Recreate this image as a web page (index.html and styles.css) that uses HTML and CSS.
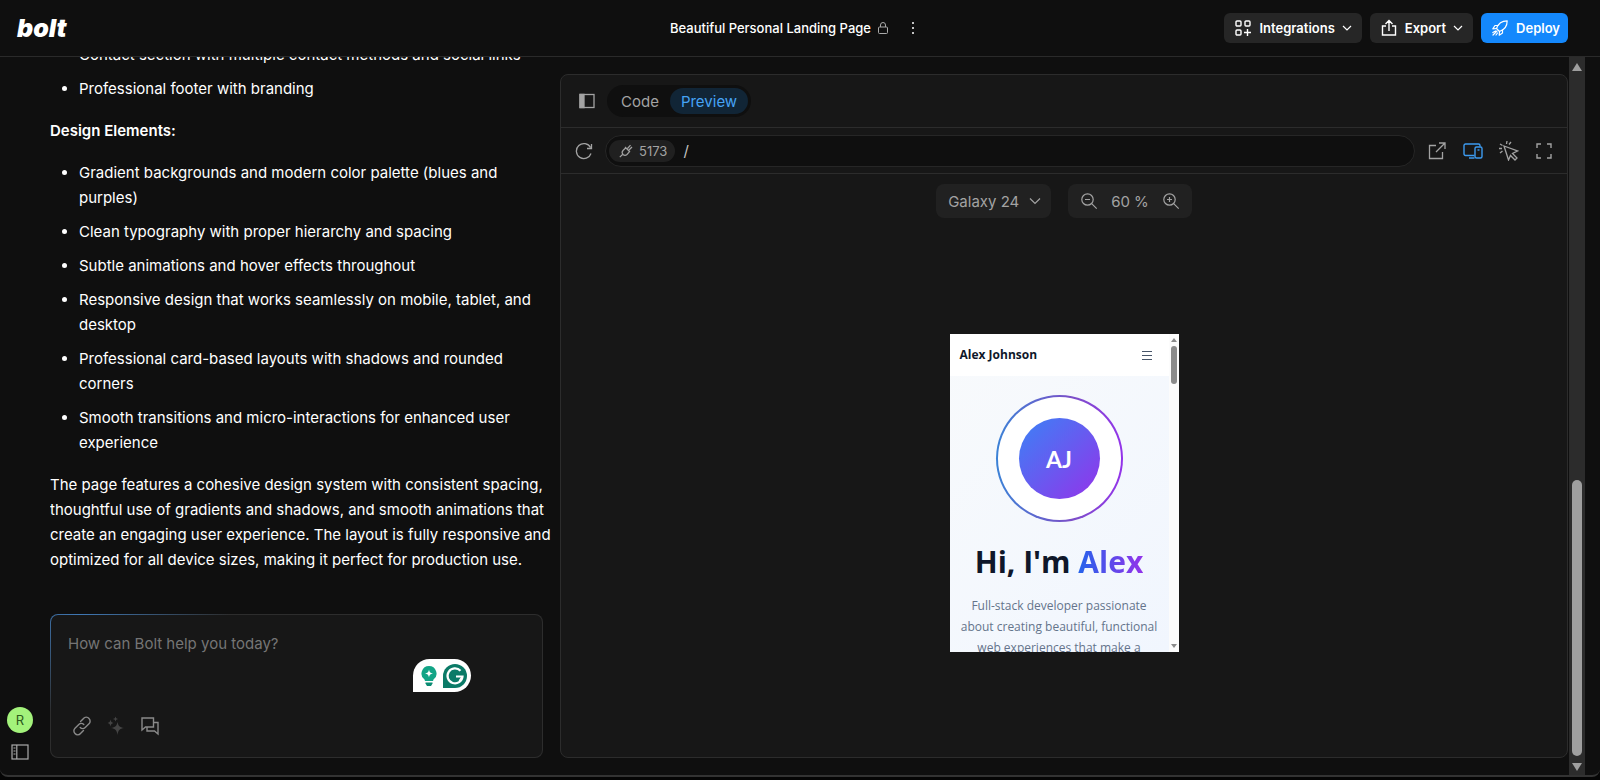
FILE: index.html
```html
<!DOCTYPE html>
<html lang="en">
<head>
    <meta charset="UTF-8">
    <meta name="viewport" content="width=device-width, initial-scale=1.0">
    <title>Beautiful Personal Landing Page</title>
    <link rel="stylesheet" href="styles.css">
</head>
<body>
    <div class="window">
        <!-- Top bar -->
        <header class="topbar">
            <a href="#" class="logo">bolt</a>
            <div class="project">
                <span class="project-name">Beautiful Personal Landing Page</span>
                <svg class="lock" width="12" height="14" viewBox="0 0 12 14" fill="none" stroke="currentColor"><rect x="1.500" y="6" width="9" height="6.500" rx="1"/><path d="M3.500 6V4a2.500 2.500 0 0 1 5 0v2"/></svg>
                <button class="icon-btn more" aria-label="More options">
                    <svg width="4" height="14" viewBox="0 0 4 14" fill="currentColor"><circle cx="2" cy="2" r="1"/><circle cx="2" cy="7" r="1"/><circle cx="2" cy="12" r="1"/></svg>
                </button>
            </div>
            <div class="actions">
                <button class="btn">
                    <svg width="18" height="18" viewBox="0 0 18 18" fill="none" stroke="currentColor" stroke-width="1.400"><rect x="2" y="2" width="5" height="5" rx="1"/><rect x="11" y="2" width="5" height="5" rx="1"/><rect x="2" y="11" width="5" height="5" rx="1"/><path d="M13.500 10v7M10 13.500h7"/></svg>
                    <span>Integrations</span>
                    <svg class="chevron" width="10" height="10" viewBox="0 0 10 10" fill="none" stroke="currentColor" stroke-width="1.200"><path d="M1 3l4 4 4-4"/></svg>
                </button>
                <button class="btn">
                    <svg width="18" height="18" viewBox="0 0 18 18" fill="none" stroke="currentColor" stroke-width="1.400"><path d="M6 7H2.500v9h13V7H12M9 12V2M5.500 5L9 1.500 12.500 5"/></svg>
                    <span>Export</span>
                    <svg class="chevron" width="10" height="10" viewBox="0 0 10 10" fill="none" stroke="currentColor" stroke-width="1.200"><path d="M1 3l4 4 4-4"/></svg>
                </button>
                <button class="btn deploy">
                    <svg width="18" height="18" viewBox="0 0 18 18" fill="none" stroke="currentColor" stroke-width="1.200" stroke-linejoin="round" stroke-linecap="round"><path d="M5.500 9.500C7 5 10.500 1.800 16.200 1.800c0 5.700-3.200 9.200-7.700 10.700z"/><path d="M7 6.500H4L1.800 9.800l3.700-.3M11.500 11v3l-3.300 2.200.3-3.700M4.500 12l-2.700 1.500M2 16l4-4M5 16l1.500-2"/></svg>
                    <span>Deploy</span>
                </button>
            </div>
        </header>

        <div class="content">
            <main class="main">
                <!-- Left rail with avatar and sidebar toggle -->
                <nav class="rail">
                    <button class="avatar" aria-label="Account">R</button>
                    <button class="icon-btn" aria-label="Open sidebar">
                        <svg width="18" height="16" viewBox="0 0 18 16" fill="none" stroke="currentColor" stroke-width="1.200"><rect x="1" y="1" width="16" height="14"/><path d="M5.800 1v14"/><path d="M2.500 4h2M2.500 7h2M2.500 10h2" stroke-width="1"/></svg>
                    </button>
                </nav>

                <!-- Chat -->
                <section class="chat">
                    <div class="messages">
                        <ul>
                            <li>Contact section with multiple contact methods and social links</li>
                            <li>Professional footer with branding</li>
                        </ul>
                        <p><strong>Design Elements:</strong></p>
                        <ul>
                            <li>Gradient backgrounds and modern color palette (blues and purples)</li>
                            <li>Clean typography with proper hierarchy and spacing</li>
                            <li>Subtle animations and hover effects throughout</li>
                            <li>Responsive design that works seamlessly on mobile, tablet, and desktop</li>
                            <li>Professional card-based layouts with shadows and rounded corners</li>
                            <li>Smooth transitions and micro-interactions for enhanced user experience</li>
                        </ul>
                        <p>The page features a cohesive design system with consistent spacing, thoughtful use of gradients and shadows, and smooth animations that create an engaging user experience. The layout is fully responsive and optimized for all device sizes, making it perfect for production use.</p>
                    </div>

                    <form class="prompt">
                        <textarea class="prompt-text" aria-label="Message" placeholder="How can Bolt help you today?"></textarea>
                        <div class="prompt-tools">
                            <button type="button" class="icon-btn" aria-label="Attach link">
                                <svg width="20" height="20" viewBox="0 0 20 20" fill="none" stroke="currentColor" stroke-width="1.400" stroke-linecap="round"><path d="M8.500 5.500l3-3a3.500 3.500 0 0 1 5.500 0 3.700 3.700 0 0 1 0 5.300l-3.800 3.800a3.500 3.500 0 0 1-5 0M11.500 14.500l-3 3a3.500 3.500 0 0 1-5.500 0 3.700 3.700 0 0 1 0-5.300l3.800-3.800a3.500 3.500 0 0 1 5 0"/></svg>
                            </button>
                            <button type="button" class="icon-btn faded" aria-label="Enhance prompt">
                                <svg width="20" height="20" viewBox="0 0 20 20" fill="currentColor"><path d="M11.500 6c.8 4 2 5.200 6.500 6-4.500.8-5.700 2-6.500 7-.8-5-2-6.200-6.500-7 4.500-.8 5.700-2 6.500-6zM4.500 3.500C5 6 5.500 6.500 7.500 7 5.500 7.500 5 8 4.500 10.500 4 8 3.500 7.500 1.500 7 3.500 6.500 4 6 4.500 3.500zM9.500.5l.7 1.800 1.800.7-1.800.7-.7 1.800-.7-1.800L7 3l1.800-.7z"/></svg>
                            </button>
                            <button type="button" class="icon-btn" aria-label="Discuss">
                                <svg width="20" height="20" viewBox="0 0 20 20" fill="none" stroke="currentColor" stroke-width="1.400"><path d="M2 2h11.500v9H5.500L2 14z"/><path d="M13.500 6.500H18V18l-3.500-3H7v-4"/></svg>
                            </button>
                        </div>
                        <!-- Writing assistant badge -->
                        <div class="assistant">
                            <svg width="16" height="20" viewBox="0 0 16 20"><path d="M8 0a7.500 7.500 0 0 1 4.500 13.500L12 15H4l-.5-1.500A7.500 7.500 0 0 1 8 0z" fill="#12a486"/><path d="M4.500 16.500h7v1l-1.500 2.500H6l-1.500-2.500z" fill="#0b8a72"/><path d="M8 3.500c.6 2.800 1.200 3.400 4 4-2.800.6-3.400 1.200-4 4-.6-2.800-1.200-3.400-4-4 2.800-.6 3.400-1.200 4-4z" fill="#fff"/></svg>
                            <svg width="24" height="24" viewBox="0 0 24 24"><path d="M12 0a12 12 0 1 1 0 24H0V12A12 12 0 0 1 12 0z" fill="#0b7a67"/><path d="M17.500 6.800a7.500 7.500 0 1 0 2 5.700H13" fill="none" stroke="#fff" stroke-width="2.200"/><path d="M19.500 12.500l-3 4.500" fill="none" stroke="#fff" stroke-width="2"/></svg>
                        </div>
                    </form>
                </section>

                <!-- Workbench -->
                <section class="workbench">
                    <div class="tabs-row">
                        <button class="icon-btn" aria-label="Toggle panel">
                            <svg width="16" height="16" viewBox="0 0 16 16" fill="none" stroke="currentColor" stroke-width="1.300"><rect x="1" y="1.500" width="14" height="13"/><path d="M1 1.500h4v13H1z" fill="currentColor"/></svg>
                        </button>
                        <div class="tabs">
                            <button class="tab">Code</button>
                            <button class="tab active">Preview</button>
                        </div>
                    </div>

                    <div class="address-row">
                        <button class="icon-btn" aria-label="Reload preview">
                            <svg width="18" height="18" viewBox="0 0 18 18" fill="none" stroke="currentColor" stroke-width="1.300"><path d="M15.500 5.500A7.500 7.500 0 1 0 16 11.500M16.500 2v4.500H12"/></svg>
                        </button>
                        <div class="address">
                            <button class="port">
                                <svg width="14" height="14" viewBox="0 0 14 14" fill="none" stroke="currentColor" stroke-width="1.200"><path d="M.8 13.200l2.700-2.700M6 3l5 5M6.800 3.800L4 6.500a3 3 0 0 0 0 4 3 3 0 0 0 4 0l2.500-2.800M8.500 4.500l3-3.300M10 6l3-3"/></svg>
                                <span>5173</span>
                            </button>
                            <input class="path" type="text" aria-label="Path" value="/">
                        </div>
                        <div class="address-tools">
                            <button class="icon-btn" aria-label="Open in new tab">
                                <svg width="20" height="20" viewBox="0 0 20 20" fill="none" stroke="currentColor" stroke-width="1.300"><path d="M9 4.500H2.500v13h13V11M12 2h6v6M18 2l-9 9"/></svg>
                            </button>
                            <button class="icon-btn on" aria-label="Device preview">
                                <svg width="20" height="20" viewBox="0 0 20 20" fill="none" stroke="currentColor" stroke-width="1.400"><path d="M11.500 14.500H2.500a1.500 1.500 0 0 1-1.500-1.500V4.500A1.500 1.500 0 0 1 2.500 3h13A1.500 1.500 0 0 1 17 4.500v1M6 17h5.500"/><rect x="12" y="6" width="7" height="11" rx="1.500"/><path d="M14.500 9h2"/></svg>
                            </button>
                            <button class="icon-btn" aria-label="Select element">
                                <svg width="20" height="20" viewBox="0 0 20 20" fill="none" stroke="currentColor" stroke-width="1.300"><path d="M5 5l13.500 5-5 2.500 4.500 4.500-2 2-4.500-4.500-2 4.500z"/><path d="M8 0L7.500 3M12 1l-2 2.500M1 3l2.500 1.500M0 7.500h3M1 12l2.500-2"/></svg>
                            </button>
                            <button class="icon-btn" aria-label="Full screen">
                                <svg width="18" height="18" viewBox="0 0 18 18" fill="none" stroke="currentColor" stroke-width="1.400"><path d="M6 2H2v4M12 2h4v4M6 16H2v-4M12 16h4v-4"/></svg>
                            </button>
                        </div>
                    </div>

                    <div class="device-row">
                        <label class="pill device">
                            <select aria-label="Device">
                                <option>Galaxy 24</option>
                            </select>
                            <svg width="12" height="12" viewBox="0 0 12 12" fill="none" stroke="currentColor" stroke-width="1.200"><path d="M1 3.500l5 5 5-5"/></svg>
                        </label>
                        <div class="pill zoom">
                            <button class="icon-btn" aria-label="Zoom out">
                                <svg width="18" height="18" viewBox="0 0 18 18" fill="none" stroke="currentColor" stroke-width="1.200"><circle cx="7.500" cy="7.500" r="5.700"/><path d="M11.700 11.700l5 5M5 7.500h5"/></svg>
                            </button>
                            <span>60 %</span>
                            <button class="icon-btn" aria-label="Zoom in">
                                <svg width="18" height="18" viewBox="0 0 18 18" fill="none" stroke="currentColor" stroke-width="1.200"><circle cx="7.500" cy="7.500" r="5.700"/><path d="M11.700 11.700l5 5M5 7.500h5M7.500 5v5"/></svg>
                            </button>
                        </div>
                    </div>

                    <div class="stage">
                        <article class="phone">
                            <div class="site">
                                <div class="site-nav">
                                    <span class="site-name">Alex Johnson</span>
                                    <button class="icon-btn site-menu" aria-label="Menu">
                                        <svg width="10" height="10" viewBox="0 0 10 10" stroke="currentColor" fill="none"><path d="M0 1.500h10M0 5.500h10M0 9.500h10"/></svg>
                                    </button>
                                </div>
                                <div class="hero">
                                    <div class="ring"><div class="ring-inner"><div class="initials">AJ</div></div></div>
                                    <h1>Hi, I'm <span>Alex</span></h1>
                                    <p>Full-stack developer passionate about creating beautiful, functional web experiences that make a</p>
                                </div>
                            </div>
                            <div class="scrollbar small" aria-hidden="true">
                                <i class="arrow up"></i><i class="thumb"></i><i class="arrow down"></i>
                            </div>
                        </article>
                    </div>
                </section>
            </main>
            <div class="scrollbar" aria-hidden="true">
                <i class="arrow up"></i><i class="thumb"></i><i class="arrow down"></i>
            </div>
        </div>
    </div>
</body>
</html>
```

FILE: styles.css
```css
* {
    box-sizing: border-box;
}

body {
    margin: 0;
    height: 100vh;
    padding-bottom: 3px;
    background-color: #050505;
    color: #fff;
    font-family: Inter, sans-serif;
    font-size: 15px;
    overflow: hidden;
}

button {
    font: inherit;
    color: inherit;
    border: none;
    background: none;
    padding: 0;
    cursor: pointer;
}

svg {
    display: block;
    flex: none;
}

.window {
    height: 100%;
    display: flex;
    flex-direction: column;
    background-color: #0f0f0f;
    border-bottom: 2px solid #333;
    border-radius: 0 0 8px 8px;
    overflow: hidden;
}

/* Top bar */
.topbar {
    display: grid;
    grid-template-columns: 1fr auto 1fr;
    align-items: center;
    height: 57px;
    padding: 0 32px 0 17px;
    border-bottom: 1px solid #2a2a2a;
    flex: none;
}

.logo {
    color: #fff;
    font-size: 25px;
    font-weight: 900;
    font-style: italic;
    line-height: 24px;
    text-decoration: none;
}

.project {
    display: flex;
    align-items: center;
    gap: 6px;
    font-size: 13px;
    font-weight: 500;
}

.lock {
    color: #aaa;
}

.more {
    margin-left: 16px;
}

.actions {
    display: flex;
    justify-content: flex-end;
    gap: 8px;
}

.btn {
    display: flex;
    align-items: center;
    gap: 7px;
    height: 30px;
    padding: 0 10px;
    border-radius: 6px;
    background-color: #262626;
    font-size: 13px;
    font-weight: 600;
}

.btn:hover {
    background-color: #333;
}

.btn.deploy {
    background-color: #1488fc;
    padding-right: 8px;
}

/* Page body */
.content {
    display: flex;
    flex: 1;
    min-height: 0;
    padding-right: 15px;
}

.main {
    flex: 1;
    display: grid;
    grid-template-columns: 50px 493fr 1025fr;
    padding: 0 1px 0 0;
    min-width: 0;
}

.rail {
    display: flex;
    flex-direction: column;
    justify-content: flex-end;
    align-items: flex-start;
    gap: 11px;
    padding: 0 0 15px 7px;
    color: #aaa;
}

.rail .icon-btn {
    margin-left: 4px;
}

.avatar {
    width: 26px;
    height: 26px;
    border-radius: 50%;
    background-color: #a3f27b;
    color: #2c5a1c;
    font-size: 13px;
}

.icon-btn {
    display: flex;
    align-items: center;
    justify-content: center;
}

/* Chat */
.chat {
    display: flex;
    flex-direction: column;
    min-width: 0;
    min-height: 0;
    padding-bottom: 17px;
}

/* Runs a little into the gutter so the last word of a line fits */
.messages {
    flex: 1;
    min-height: 0;
    display: flex;
    flex-direction: column;
    justify-content: flex-end;
    gap: 17px;
    margin-right: -12px;
    padding-bottom: 42px;
    overflow: hidden;
    line-height: 25px;
}

.messages p,
.messages ul {
    margin: 0;
}

.messages ul {
    display: flex;
    flex-direction: column;
    gap: 9px;
    padding-left: 29px;
}

.messages strong {
    font-weight: 600;
}

.prompt {
    position: relative;
    display: flex;
    flex-direction: column;
    height: 144px;
    padding: 17px;
    border: 1px solid transparent;
    border-radius: 8px;
    background:
        linear-gradient(#171717, #171717) padding-box,
        radial-gradient(150px 100px at 30px 0, #3f78b5, #2d2d2d) border-box;
}

.prompt-text {
    flex: 1;
    border: none;
    outline: none;
    padding: 0;
    resize: none;
    background: none;
    color: #fff;
    font: inherit;
    line-height: 24px;
}

.prompt-text::placeholder {
    color: #757575;
}

.prompt-tools {
    display: flex;
    gap: 14px;
    padding: 0 0 4px 4px;
    color: #8a8a8a;
}

.faded {
    color: #444;
}

.assistant {
    position: absolute;
    right: 71px;
    top: 44px;
    display: flex;
    align-items: center;
    gap: 6px;
    height: 33px;
    padding: 0 4px 0 8px;
    border-radius: 17px 17px 17px 0;
    background-color: #fff;
}

/* Workbench */
.workbench {
    display: flex;
    flex-direction: column;
    min-width: 0;
    margin: 17px 0 17px 17px;
    border: 1px solid #2c2c2c;
    border-radius: 8px;
    background-color: #171717;
    color: #a3a3a3;
}

.tabs-row {
    display: flex;
    align-items: center;
    gap: 12px;
    height: 53px;
    padding: 0 18px;
    border-bottom: 1px solid #2c2c2c;
}

.tabs {
    display: flex;
    align-items: center;
    height: 32px;
    padding: 0 3px;
    border-radius: 16px;
    background-color: #0f0f0f;
}

.tab {
    height: 26px;
    padding: 0 11px;
    border-radius: 13px;
}

.tab.active {
    background-color: #112536;
    color: #46a3f5;
}

.address-row {
    display: flex;
    align-items: center;
    gap: 12px;
    height: 46px;
    padding: 0 14px;
    border-bottom: 1px solid #2c2c2c;
}

.address {
    flex: 1;
    display: flex;
    align-items: center;
    gap: 8px;
    height: 32px;
    padding: 0 4px 0 3px;
    border: 1px solid #262626;
    border-radius: 16px;
    background-color: #0f0f0f;
}

.port {
    display: flex;
    align-items: center;
    gap: 6px;
    height: 22px;
    padding: 0 8px 0 10px;
    border-radius: 11px;
    background-color: #202020;
    font-size: 13px;
}

.path {
    flex: 1;
    min-width: 0;
    border: none;
    outline: none;
    padding: 0;
    background: none;
    color: #c4c4c4;
    font: inherit;
}

.address-tools {
    display: flex;
    align-items: center;
    gap: 16px;
}

.on {
    color: #3d9bf0;
}

.device-row {
    display: flex;
    justify-content: center;
    gap: 17px;
    padding-top: 10px;
}

.pill {
    display: flex;
    align-items: center;
    height: 34px;
    padding: 0 12px;
    border-radius: 8px;
    background-color: #212121;
}

.device {
    gap: 9px;
    padding-right: 10px;
}

.device select {
    appearance: none;
    border: none;
    outline: none;
    padding: 0;
    background: none;
    color: inherit;
    font: inherit;
}

.zoom {
    gap: 13px;
}

.stage {
    flex: 1;
    display: flex;
    align-items: center;
    justify-content: center;
    padding-top: 10px;
}

/* Previewed site */
.phone {
    display: flex;
    width: 229px;
    height: 318px;
    overflow: hidden;
    background-color: #fff;
    font-family: "Open Sans", "Noto Sans", sans-serif;
}

.site {
    flex: 1;
    min-width: 0;
    background: linear-gradient(135deg, #f8fafc, #f1f6fe);
}

.site-nav {
    display: flex;
    align-items: center;
    justify-content: space-between;
    height: 42px;
    padding: 0 17px 0 10px;
    background-color: #fff;
    color: #0f172a;
}

.site-name {
    font-size: 12px;
    font-weight: 700;
}

.site-menu {
    color: #475569;
}

.hero {
    display: flex;
    flex-direction: column;
    align-items: center;
    padding: 19px 5px 0;
    text-align: center;
}

.ring {
    width: 127px;
    height: 127px;
    padding: 2px;
    border-radius: 50%;
    background: linear-gradient(90deg, #3b82d6, #7c4fc8 60%, #9333ea);
}

.ring-inner {
    display: flex;
    align-items: center;
    justify-content: center;
    height: 100%;
    border-radius: 50%;
    background-color: #fff;
}

.initials {
    width: 81px;
    height: 81px;
    border-radius: 50%;
    background: linear-gradient(135deg, #3b82f6, #9333ea);
    color: #fff;
    font-family: Lato, sans-serif;
    font-size: 23px;
    font-weight: 700;
    line-height: 82px;
}

.hero h1 {
    margin: 21px 0 0;
    color: #0f172a;
    font-size: 30px;
    font-weight: 700;
    line-height: 38px;
}

.hero h1 span {
    background: linear-gradient(90deg, #2563eb, #9333ea);
    background-clip: text;
    color: transparent;
}

.hero p {
    margin: 14px 0 0;
    color: #64748b;
    font-size: 12px;
    line-height: 21px;
}

/* Scrollbars */
.scrollbar {
    display: flex;
    flex-direction: column;
    align-items: center;
    width: 16px;
    padding: 6px 0 4px;
    background-color: #2c2c2c;
}

.arrow {
    border: 5px solid transparent;
}

.arrow.up {
    border-top: none;
    border-bottom: 8px solid #9f9f9f;
}

.arrow.down {
    border-bottom: none;
    border-top: 8px solid #9f9f9f;
}

.thumb {
    width: 10px;
    height: 39%;
    margin: auto 0 7px;
    border-radius: 5px;
    background-color: #9f9f9f;
}

.scrollbar.small {
    width: 10px;
    padding: 4px 0;
    background-color: #fcfcfc;
}

.small .arrow {
    border-width: 4px 3px;
    border-top-color: transparent;
}

.small .arrow.up {
    border-top: none;
    border-bottom-color: #8b8b8b;
}

.small .arrow.down {
    border-top-color: #8b8b8b;
    border-bottom: none;
}

.small .thumb {
    width: 6px;
    height: 38px;
    margin: 4px 0 auto;
    border-radius: 3px;
    background-color: #8b8b8b;
}
```
